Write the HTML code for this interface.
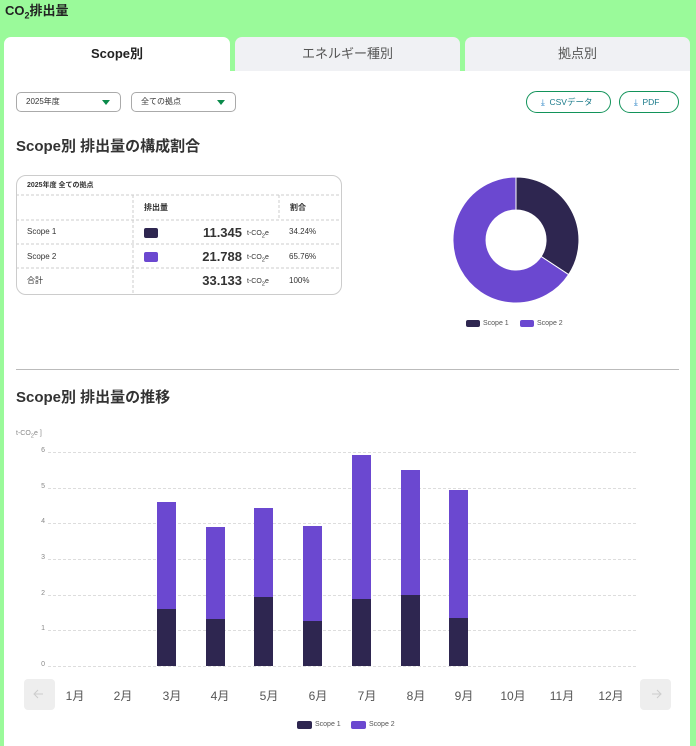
<!DOCTYPE html>
<html><head><meta charset="utf-8"><style>
*{box-sizing:border-box;margin:0;padding:0}
body{width:696px;height:746px;background:#9afa9a;font-family:"Liberation Sans","Noto Sans CJK JP",sans-serif;color:#333;position:relative;overflow:hidden}
.a{position:absolute}
sub{line-height:0}
.tab{position:absolute;top:37px;height:34px;border-radius:7px 7px 0 0;background:#f0f1f4;text-align:center;line-height:34px;font-size:13px;color:#555}
.sel{border:1px solid #aaa;border-radius:5px;height:20px;font-size:8px;padding-left:9px;line-height:18px;color:#333}
.tri{position:absolute;right:10px;top:7px;width:0;height:0;border-left:4px solid transparent;border-right:4px solid transparent;border-top:5px solid #0a8a4a}
.btn{border:1px solid #12935a;border-radius:11px;height:22px;font-size:8.5px;color:#1a7a8a;line-height:20px}
.btn b{color:#1a7ac0;font-weight:normal}
h2{position:absolute;font-size:15px;font-weight:bold;color:#333}
.c{position:absolute;font-size:8px;color:#333;line-height:10px}
.m{position:absolute;top:687px;font-size:12px;color:#555;width:40px;text-align:center}
.y{position:absolute;left:30px;font-size:7px;color:#888;width:15px;text-align:right}
</style></head><body>
<div class="a" style="left:5px;top:3px;font-size:13px;font-weight:bold;color:#222;line-height:16px">CO<sub style="font-size:9px">2</sub>排出量</div>
<div class="a" style="left:4px;top:71px;width:686px;height:675px;background:#fff"></div>
<div class="tab" style="left:4px;width:226px;background:#fff;color:#222;font-weight:bold">Scope別</div>
<div class="tab" style="left:235px;width:225px">エネルギー種別</div>
<div class="tab" style="left:465px;width:225px">拠点別</div>

<div class="a sel" style="left:16px;top:92px;width:105px">2025年度<span class="tri"></span></div>
<div class="a sel" style="left:131px;top:92px;width:105px">全ての拠点<span class="tri"></span></div>
<div class="a btn" style="left:526px;top:91px;width:85px;padding-left:14px"><b>⤓</b>&nbsp; CSVデータ</div>
<div class="a btn" style="left:619px;top:91px;width:60px;padding-left:14px"><b>⤓</b>&nbsp; PDF</div>

<h2 style="left:16px;top:135px">Scope別 排出量の構成割合</h2>
<div class="a" style="left:16px;top:175px;width:326px;height:120px;border:1px solid #ccc;border-radius:10px"></div>
<div class="c" style="left:27px;top:181px;font-size:7px;font-weight:bold">2025年度 全ての拠点</div>
<svg class="a" style="left:16px;top:175px" width="326" height="120"><g stroke="#ccc" stroke-dasharray="3,2" stroke-width="1"><line x1="0" y1="20" x2="326" y2="20"/><line x1="0" y1="45" x2="326" y2="45"/><line x1="0" y1="69" x2="326" y2="69"/><line x1="0" y1="93" x2="326" y2="93"/><line x1="117" y1="20" x2="117" y2="120"/><line x1="263" y1="20" x2="263" y2="45"/></g></svg>
<div class="c" style="left:144px;top:203px;font-weight:bold">排出量</div>
<div class="c" style="left:290px;top:203px;font-weight:bold">割合</div>
<div class="c" style="left:27px;top:227px">Scope 1</div>
<div class="c" style="left:27px;top:252px">Scope 2</div>
<div class="c" style="left:27px;top:276px">合計</div>
<div class="a" style="left:144px;top:228px;width:14px;height:10px;background:#2e2650;border-radius:2px"></div>
<div class="a" style="left:144px;top:252px;width:14px;height:10px;background:#6b48d0;border-radius:2px"></div>
<div class="a" style="left:190px;top:225px;width:52px;text-align:right;font-size:13px;font-weight:bold">11.345</div>
<div class="a" style="left:190px;top:249px;width:52px;text-align:right;font-size:13px;font-weight:bold">21.788</div>
<div class="a" style="left:190px;top:273px;width:52px;text-align:right;font-size:13px;font-weight:bold">33.133</div>
<div class="c" style="left:247px;top:229px;font-size:7px">t-CO<sub>2</sub>e</div>
<div class="c" style="left:247px;top:253px;font-size:7px">t-CO<sub>2</sub>e</div>
<div class="c" style="left:247px;top:277px;font-size:7px">t-CO<sub>2</sub>e</div>
<div class="c" style="left:289px;top:227px">34.24%</div>
<div class="c" style="left:289px;top:252px">65.76%</div>
<div class="c" style="left:289px;top:276px">100%</div>

<svg class="a" style="left:0;top:0" width="696" height="746">
<path d="M516 177 A63 63 0 0 1 568.6 274.6 L541.1 256.5 A30 30 0 0 0 516 210Z" fill="#2e2650" stroke="#fff"/>
<path d="M568.6 274.6 A63 63 0 1 1 516 177 L516 210 A30 30 0 1 0 541.1 256.5Z" fill="#6b48d0" stroke="#fff"/>
<line x1="16" y1="369.5" x2="679" y2="369.5" stroke="#bbb"/>
<g stroke="#ddd" stroke-dasharray="3,2"><line x1="48" y1="452.5" x2="636" y2="452.5"/><line x1="48" y1="488.5" x2="636" y2="488.5"/><line x1="48" y1="523.5" x2="636" y2="523.5"/><line x1="48" y1="559.5" x2="636" y2="559.5"/><line x1="48" y1="595.5" x2="636" y2="595.5"/><line x1="48" y1="630.5" x2="636" y2="630.5"/><line x1="48" y1="666.5" x2="636" y2="666.5"/></g>
<g fill="#6b48d0"><rect x="157" y="502" width="19" height="164"/><rect x="206" y="527" width="19" height="139"/><rect x="254" y="508" width="19" height="158"/><rect x="303" y="526" width="19" height="140"/><rect x="352" y="455" width="19" height="211"/><rect x="401" y="470" width="19" height="196"/><rect x="449" y="490" width="19" height="176"/></g>
<g fill="#2e2650"><rect x="157" y="609" width="19" height="57"/><rect x="206" y="619" width="19" height="47"/><rect x="254" y="597" width="19" height="69"/><rect x="303" y="621" width="19" height="45"/><rect x="352" y="599" width="19" height="67"/><rect x="401" y="595" width="19" height="71"/><rect x="449" y="618" width="19" height="48"/></g>
<rect x="24" y="679" width="31" height="31" rx="4" fill="#eee"/><rect x="640" y="679" width="31" height="31" rx="4" fill="#eee"/>
<path d="M43 694H35M38 690L34 694 38 698" stroke="#ccc" fill="none"/><path d="M652 694H660M657 690L661 694 657 698" stroke="#ccc" fill="none"/>
<rect x="466" y="320" width="14" height="7" rx="2" fill="#2e2650"/><rect x="520" y="320" width="14" height="7" rx="2" fill="#6b48d0"/>
<rect x="297" y="721" width="15" height="8" rx="2" fill="#2e2650"/><rect x="351" y="721" width="15" height="8" rx="2" fill="#6b48d0"/>
</svg>
<div class="c" style="left:483px;top:319px;font-size:7px;color:#555">Scope 1</div>
<div class="c" style="left:537px;top:319px;font-size:7px;color:#555">Scope 2</div>
<div class="c" style="left:315px;top:720px;font-size:7px;color:#555">Scope 1</div>
<div class="c" style="left:369px;top:720px;font-size:7px;color:#555">Scope 2</div>

<h2 style="left:16px;top:386px">Scope別 排出量の推移</h2>
<div class="a" style="left:16px;top:429px;font-size:7px;color:#888;line-height:9px">t-CO<sub>2</sub>e ]</div>
<div class="y" style="top:447px">6</div><div class="y" style="top:483px">5</div><div class="y" style="top:518px">4</div><div class="y" style="top:554px">3</div><div class="y" style="top:590px">2</div><div class="y" style="top:625px">1</div><div class="y" style="top:661px">0</div>
<div class="m" style="left:55px">1月</div><div class="m" style="left:103px">2月</div><div class="m" style="left:152px">3月</div><div class="m" style="left:200px">4月</div><div class="m" style="left:249px">5月</div><div class="m" style="left:298px">6月</div><div class="m" style="left:347px">7月</div><div class="m" style="left:396px">8月</div><div class="m" style="left:444px">9月</div><div class="m" style="left:493px">10月</div><div class="m" style="left:542px">11月</div><div class="m" style="left:591px">12月</div>
</body></html>
